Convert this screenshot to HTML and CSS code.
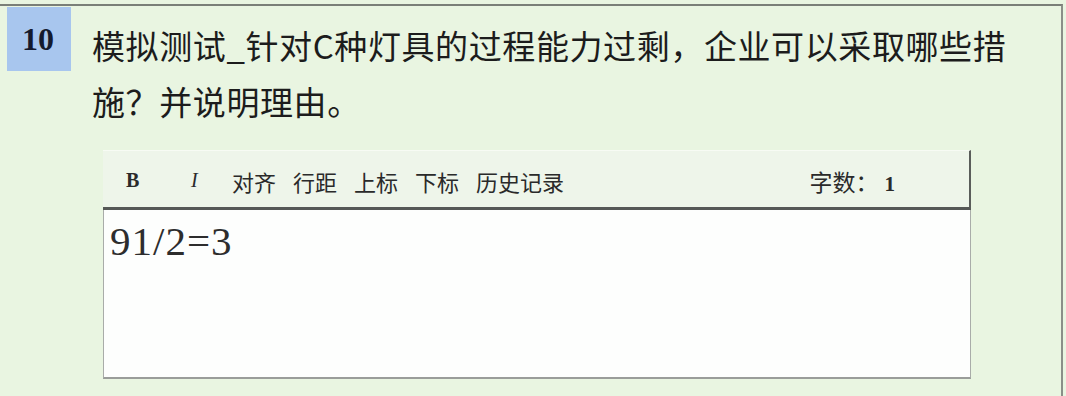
FILE: index.html
```html
<!DOCTYPE html>
<html lang="zh">
<head>
<meta charset="utf-8">
<link rel="stylesheet" href="styles.css">
</head>
<body>
<div class="frame">
  <div class="question">
    <div class="badge">10</div>
    <div class="qtext">模拟测试_针对C种灯具的过程能力过剩，企业可以采取哪些措施？并说明理由。</div>
  </div>
  <div class="editor">
    <div class="toolbar">
      <span class="tb-b">B</span>
      <span class="tb-i">I</span>
      <span class="tb-item">对齐</span>
      <span class="tb-item">行距</span>
      <span class="tb-item">上标</span>
      <span class="tb-item">下标</span>
      <span class="tb-item">历史记录</span>
      <span class="count">字数：<b>1</b></span>
    </div>
    <div class="area">91/2=3</div>
  </div>
</div>
</body>
</html>
```
FILE: styles.css
```css
html, body {
  margin: 0;
  padding: 0;
  background: #e9f5e1;
  width: 1066px;
  height: 396px;
  overflow: hidden;
}
.frame {
  margin-top: 4px;
  width: 1063px;
  height: 392px;
  border-top: 2px solid #7a7f78;
  border-right: 2px solid #8a8f88;
  box-sizing: border-box;
}
.question {
  display: flex;
  align-items: flex-start;
  padding-left: 7px;
  padding-top: 1px;
}
.badge {
  width: 64px;
  height: 64px;
  background: #a8c6ee;
  color: #141a2e;
  font-family: "Liberation Serif", serif;
  font-weight: bold;
  font-size: 32px;
  display: flex;
  align-items: center;
  justify-content: center;
  box-sizing: border-box;
  padding-right: 2px;
  flex: none;
}
.qtext {
  margin-left: 21px;
  margin-top: 10px;
  width: 930px;
  font-family: "Noto Sans CJK SC", "Liberation Sans", sans-serif;
  font-size: 33px;
  line-height: 56px;
  letter-spacing: 0.6px;
  color: #1c1c1c;
}
.editor {
  margin-left: 103px;
  margin-top: 21px;
  width: 868px;
}
.toolbar {
  display: flex;
  align-items: center;
  background: #eef5ea;
  border-top: 1px solid #f7fbf4;
  border-right: 2px solid #5a5d5a;
  border-bottom: 3px solid #555856;
  padding-left: 23px;
  padding-right: 74px;
  padding-top: 3px;
  box-sizing: border-box;
  height: 60px;
  font-family: "Noto Sans CJK SC", sans-serif;
  font-size: 22px;
  color: #2a2a2a;
}
.tb-b {
  font-family: "Liberation Serif", serif;
  font-weight: bold;
  font-size: 20px;
  width: 65px;
}
.tb-i {
  font-family: "Liberation Serif", serif;
  font-style: italic;
  font-size: 20px;
  width: 41px;
}
.tb-item {
  margin-right: 17px;
}
.count {
  margin-left: auto;
  font-size: 23px;
}
.count b {
  font-family: "Liberation Serif", serif;
  font-size: 21px;
  margin-left: 6px;
}
.area {
  height: 169px;
  box-sizing: border-box;
  background: #fdfefd;
  border-left: 1px solid #a9aca9;
  border-right: 1px solid #a9aca9;
  border-bottom: 2px solid #9a9d9a;
  font-family: "Liberation Serif", serif;
  font-size: 41px;
  letter-spacing: 1px;
  color: #2d2d2d;
  padding-left: 6px;
  padding-top: 8px;
  line-height: 46px;
}
```
